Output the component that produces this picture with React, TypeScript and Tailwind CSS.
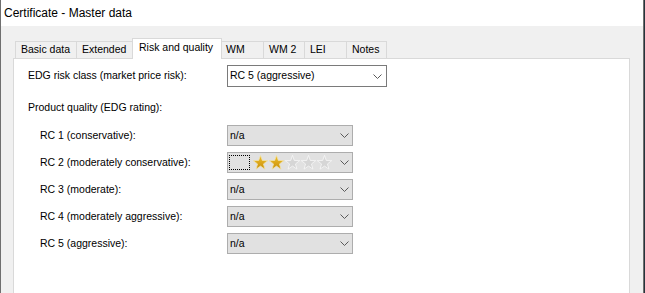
import React from "react";

const Chevron = () => (
  <svg width="9" height="5" viewBox="0 0 9 5" className="block">
    <polyline points="0.5,0.5 4.5,4.5 8.5,0.5" fill="none" stroke="#5a5a5a" strokeWidth="1" />
  </svg>
);

const Star = ({ gold }: { gold: boolean }) => (
  <svg width="15" height="15" viewBox="0 0 15 15" className="block">
    <defs>
      <linearGradient id="goldg" x1="0" y1="0" x2="0" y2="1">
        <stop offset="0" stopColor="#efc02c" />
        <stop offset="1" stopColor="#c98f0a" />
      </linearGradient>
    </defs>
    <polygon
      points="7.5,0.4 9.32,5.49 14.73,5.65 10.45,8.96 11.97,14.15 7.5,11.1 3.03,14.15 4.55,8.96 0.27,5.65 5.68,5.49"
      fill={gold ? "url(#goldg)" : "#d6d6d6"}
      stroke={gold ? "#f1e2a6" : "#f7f7f7"}
      strokeWidth="0.8"
      strokeLinejoin="round"
    />
  </svg>
);

const tabs = [
  { label: "Basic data", w: "w-[61px]" },
  { label: "Extended", w: "w-[58px]" },
  { label: "Risk and quality", w: "w-[90px]", sel: true },
  { label: "WM", w: "w-[43px]" },
  { label: "WM 2", w: "w-[41px]" },
  { label: "LEI", w: "w-[42px]" },
  { label: "Notes", w: "w-[41px]", last: true },
];

const GrayCombo = ({ children }: { children: React.ReactNode }) => (
  <div className="w-[126px] h-[21px] border border-[#adadad] bg-[#e1e1e1] flex items-center">
    <div className="flex-1 flex items-center h-full min-w-0">{children}</div>
    <div className="w-[15px] flex items-center justify-center">
      <Chevron />
    </div>
  </div>
);

const rows = [
  { label: "RC 1 (conservative):" },
  { label: "RC 2 (moderately conservative):", stars: 2 },
  { label: "RC 3 (moderate):" },
  { label: "RC 4 (moderately aggressive):" },
  { label: "RC 5 (aggressive):" },
];

export default function App() {
  return (
    <div
      className="w-[645px] h-[293px] overflow-hidden flex bg-[#f0f0f0] text-black"
      style={{ fontFamily: '"Liberation Sans", Arial, sans-serif' }}
    >
      <div className="flex-1 flex flex-col border-l border-r border-[#6f6f6f] min-w-0">
        <div className="h-[26px] bg-white flex items-center pl-[3px] text-[12px] shrink-0">
          Certificate - Master data
        </div>
        <div className="flex-1 flex flex-col pl-[12px] pr-[13px] text-[10.5px]">
          <div className="mt-[12px] h-[20px] flex items-end pl-[2px] shrink-0">
            {tabs.map((t) =>
              t.sel ? (
                <div
                  key={t.label}
                  className={`${t.w} h-[21px] -mb-px -mx-[2px] relative z-10 bg-white border-l border-t border-r border-[#d9d9d9] flex items-center pl-[6px] pb-[3px] whitespace-nowrap`}
                >
                  {t.label}
                </div>
              ) : (
                <div
                  key={t.label}
                  className={`${t.w} h-[17px] border-l border-t ${t.last ? "border-r" : ""} border-[#d9d9d9] bg-[#f0f0f0] flex items-center pl-[5px] whitespace-nowrap`}
                >
                  {t.label}
                </div>
              )
            )}
          </div>
          <div className="flex-1 bg-white border-l border-t border-r border-[#d9d9d9] pl-[14px] pt-[6px]">
            <div className="flex items-center h-[22px]">
              <div className="w-[199px]">EDG risk class (market price risk):</div>
              <div className="w-[160px] h-[22px] border border-[#7a7a7a] bg-white flex items-center">
                <div className="flex-1 pl-[2px]">RC 5 (aggressive)</div>
                <div className="w-[17px] flex items-center justify-center">
                  <Chevron />
                </div>
              </div>
            </div>
            <div className="mt-[14px] h-[14px] flex items-center">Product quality (EDG rating):</div>
            <div className="mt-[10px] flex flex-col gap-[6px] pl-[12px]">
              {rows.map((r) => (
                <div key={r.label} className="flex items-center">
                  <div className="w-[187px]">{r.label}</div>
                  <GrayCombo>
                    {r.stars ? (
                      <div className="flex items-center">
                        <div className="ml-px w-[21px] h-[15px] border border-dotted border-black" />
                        <div className="ml-[3px] flex gap-px">
                          {[0, 1, 2, 3, 4].map((i) => (
                            <Star key={i} gold={i < r.stars!} />
                          ))}
                        </div>
                      </div>
                    ) : (
                      <div className="pl-[2px]">n/a</div>
                    )}
                  </GrayCombo>
                </div>
              ))}
            </div>
          </div>
        </div>
      </div>
      <div className="w-px bg-[#26343c]" />
    </div>
  );
}
